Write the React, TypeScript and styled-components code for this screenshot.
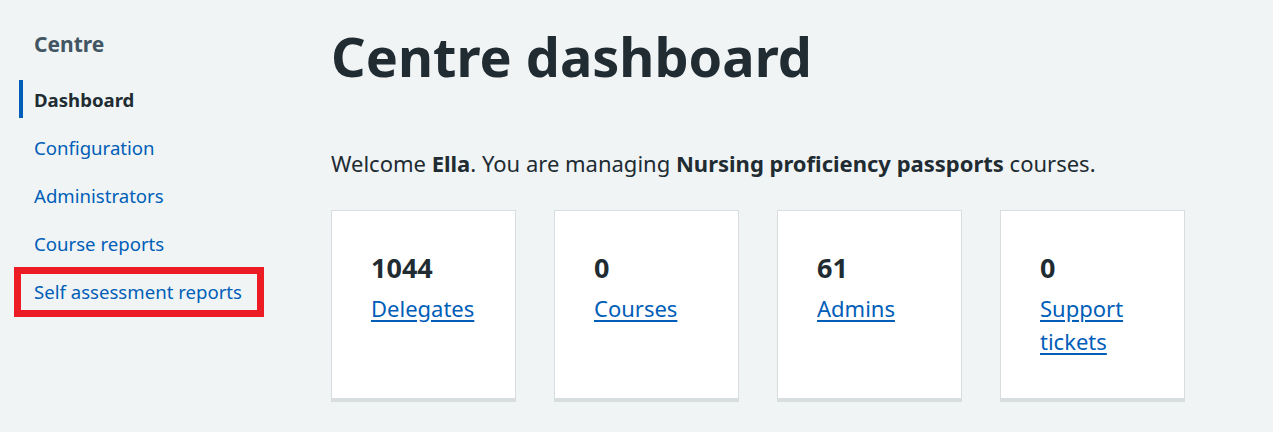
import React from "react";
import styled, {createGlobalStyle} from "styled-components";

const GlobalStyle = createGlobalStyle`
  body {
    margin: 0;
    background: #f0f4f5;
    font-family: "Noto Sans", "Open Sans", Arial, sans-serif;
    color: #212b32;
  }
`;

const Page = styled.div`
  display: grid;
  grid-template-columns: 331px 1fr;
  min-height: 432px;
`;

const Sidebar = styled.nav`
  padding: 30px 0 0 19px;
`;

const SideTitle = styled.h2`
  margin: 0 0 22px 15px;
  font-size: 21px;
  font-weight: 700;
  color: #425563;
  line-height: 28px;
`;

const SideList = styled.ul`
  list-style: none;
  margin: 0;
  padding: 0;
`;

const SideItem = styled.li<{ $active?: boolean; $marked?: boolean }>`
  position: relative;
  height: 38px;
  margin-bottom: 10px;
  display: flex;
  align-items: center;
  padding-left: 11px;
  border-left: 4px solid ${(p) => (p.$active ? "#005eb8" : "transparent")};
  font-size: 18.6px;
  color: ${(p) => (p.$active ? "#212b32" : "#005eb8")};
  font-weight: ${(p) => (p.$active ? 700 : 400)};

  ${(p) =>
    p.$marked &&
    `
    &::after {
      content: "";
      position: absolute;
      left: -9px;
      top: -5px;
      width: 236px;
      height: 36px;
      border: 7px solid #ed1c24;
    }
  `}
`;

const Main = styled.main`
  padding: 20px 0 0 0;
`;

const Heading = styled.h1`
  margin: 0 0 55px;
  font-size: 54px;
  font-weight: 700;
  line-height: 72px;
`;

const Welcome = styled.p`
  margin: 0 0 31px;
  font-size: 22px;
  line-height: 32px;
`;

const Cards = styled.div`
  display: grid;
  grid-template-columns: repeat(4, 185px);
  gap: 38px;
`;

const Card = styled.div`
  background: #fff;
  border: 1px solid #d8dde0;
  border-bottom: 4px solid #d8dde0;
  padding: 39px 40px 40px 39px;
`;

const Count = styled.div`
  font-size: 27px;
  font-weight: 700;
  line-height: 36px;
  margin-bottom: 6px;
`;

const CardLink = styled.a`
  font-size: 22px;
  line-height: 33px;
  color: #005eb8;
  text-decoration: underline;
  text-underline-offset: 3px;
`;

const navItems = [
  "Dashboard",
  "Configuration",
  "Administrators",
  "Course reports",
  "Self assessment reports",
];

const stats = [
  {count: "1044", label: "Delegates"},
  {count: "0", label: "Courses"},
  {count: "61", label: "Admins"},
  {count: "0", label: "Support tickets"},
];

export default function App() {
  return (
    <>
      <GlobalStyle />
      <Page>
        <Sidebar>
          <SideTitle>Centre</SideTitle>
          <SideList>
            {navItems.map((item, i) => (
              <SideItem
                key={item}
                $active={i === 0}
                $marked={item === "Self assessment reports"}
              >
                {item}
              </SideItem>
            ))}
          </SideList>
        </Sidebar>
        <Main>
          <Heading>Centre dashboard</Heading>
          <Welcome>
            Welcome <b>Ella</b>. You are managing{" "}
            <b>Nursing proficiency passports</b> courses.
          </Welcome>
          <Cards>
            {stats.map((s) => (
              <Card key={s.label}>
                <Count>{s.count}</Count>
                <CardLink href="#">{s.label}</CardLink>
              </Card>
            ))}
          </Cards>
        </Main>
      </Page>
    </>
  );
}
